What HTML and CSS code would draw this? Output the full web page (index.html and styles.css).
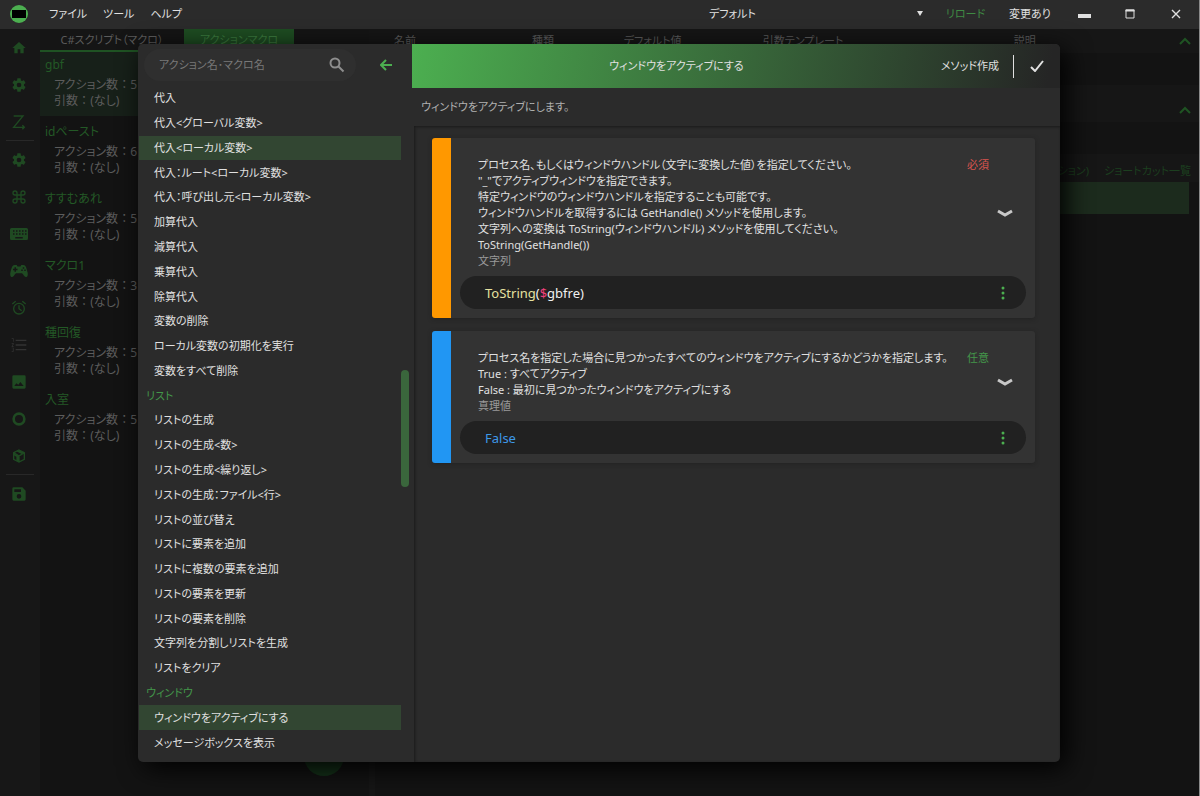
FILE: index.html
```
<!DOCTYPE html>
<html lang="ja">
<head>
    <meta charset="UTF-8">
    <title>アクションマクロ</title>
    <link rel="stylesheet" href="styles.css">
</head>
<body>
    <header class="titlebar">
        <svg class="logo" viewBox="0 0 18 18"><circle cx="9" cy="9" r="9" fill="#4caf50"/><rect x="2" y="5" width="14" height="8" fill="#000"/></svg>
        <nav class="menu">
            <button>ファイル</button>
            <button>ツール</button>
            <button>ヘルプ</button>
        </nav>
        <button class="profile"><span>デフォルト</span><i class="arrow"></i></button>
        <button class="reload">リロード</button>
        <span class="changed">変更あり</span>
        <div class="window-buttons">
            <button aria-label="最小化"><svg viewBox="0 0 14 14"><rect x="1" y="7" width="13" height="4" fill="#e0e0e0"/></svg></button>
            <button aria-label="最大化"><svg viewBox="0 0 14 14"><path d="M3 3h8v8H3z" fill="none" stroke="#e0e0e0"/><path d="M2.500 3.500h9" stroke="#e0e0e0" stroke-width="2"/></svg></button>
            <button aria-label="閉じる"><svg viewBox="0 0 14 14"><path d="M3 3l8 8M11 3l-8 8" stroke="#e0e0e0" stroke-width="1.400"/></svg></button>
        </div>
    </header>

    <div class="workspace">
        <nav class="sidebar">
            <button aria-label="ホーム"><svg viewBox="0 0 24 24"><path d="M10 20v-6h4v6h5v-8h3L12 3 2 12h3v8z"/></svg></button>
            <button aria-label="設定"><svg viewBox="0 0 24 24"><use href="#gear"/></svg></button>
            <button aria-label="Z順"><svg viewBox="0 0 24 24"><path class="line" d="M4 3h14L4 20h16M17 17l3 3-3 3"/></svg></button>
            <hr>
            <button aria-label="マクロ設定"><svg viewBox="0 0 24 24"><path id="gear" d="M12 15.500A3.500 3.500 0 0 1 8.500 12 3.500 3.500 0 0 1 12 8.500a3.500 3.500 0 0 1 3.500 3.500 3.500 3.500 0 0 1-3.500 3.500m7.430-2.530c.04-.32.07-.64.07-.97s-.03-.66-.07-1l2.110-1.630c.19-.15.24-.42.12-.64l-2-3.460c-.12-.22-.39-.31-.61-.22l-2.490 1c-.52-.39-1.060-.73-1.690-.98l-.37-2.650A.506.506 0 0 0 14 2h-4c-.25 0-.46.18-.5.42l-.37 2.650c-.63.25-1.170.59-1.690.98l-2.490-1c-.22-.09-.49 0-.61.22l-2 3.460c-.13.22-.07.49.12.64L4.570 11c-.04.34-.07.67-.07 1s.03.65.07.97l-2.110 1.660c-.19.15-.25.42-.12.64l2 3.460c.12.22.39.3.61.22l2.490-1.010c.52.4 1.060.74 1.690.99l.37 2.650c.04.24.25.42.5.42h4c.25 0 .46-.18.5-.42l.37-2.650c.63-.26 1.170-.59 1.690-.99l2.490 1.010c.22.08.49 0 .61-.22l2-3.460c.12-.22.07-.49-.12-.64z"/></svg></button>
            <button aria-label="ショートカット"><svg viewBox="0 0 24 24"><path class="line" d="M9 9V6a3 3 0 1 0-3 3h12a3 3 0 1 0-3-3v12a3 3 0 1 0 3-3H6a3 3 0 1 0 3 3z"/></svg></button>
            <button aria-label="キーボード"><svg class="wide" viewBox="0 0 24 18"><path fill-rule="evenodd" d="M2 1h20a2 2 0 0 1 2 2v12a2 2 0 0 1-2 2H2a2 2 0 0 1-2-2V3a2 2 0 0 1 2-2M4 4v2h2V4zm4 0v2h2V4zm4 0v2h2V4zm4 0v2h2V4zm4 0v2h2V4zM4 8v2h2V8zm4 0v2h2V8zm4 0v2h2V8zm4 0v2h2V8zm4 0v2h2V8zM7 13v2h10v-2z"/></svg></button>
            <button aria-label="ゲームパッド"><svg class="wide" viewBox="0 0 24 18"><path fill-rule="evenodd" d="M6 1h3l1 2h4l1-2h3c3 0 4 4 5.500 10 .8 4-.5 6-2.500 6-2 0-3-4-5-5H8c-2 1-3 5-5 5-2 0-3.300-2-2.500-6C2 5 3 1 6 1m0 3v2H4v2h2v2h2V8h2V6H8V4zm11 0v2h2V4zm-2 3v2h2V7zm4 0v2h2V7z"/></svg></button>
            <button aria-label="タイマー"><svg viewBox="0 0 24 24"><circle class="line" cx="12" cy="13" r="8"/><path class="line" d="M12 8v5l4 3M2 6l5-4M22 6l-5-4"/></svg></button>
            <button aria-label="リスト"><svg class="grey" viewBox="0 0 24 24"><path d="M7 4h16v2H7zm0 7h16v2H7zm0 7h16v2H7zM1 2h3v5H3V3H1zm0 7h3v2l-2 3h2v1H1v-1l2-4H1zm0 7h3v6H1v-1h2v-1H2v-1h1v-2H1z"/></svg></button>
            <button aria-label="画像"><svg viewBox="0 0 24 24"><path fill-rule="evenodd" d="M4 2h16a2 2 0 0 1 2 2v16a2 2 0 0 1-2 2H4a2 2 0 0 1-2-2V4a2 2 0 0 1 2-2M5 18h14l-5-6-3 4-3-2z"/></svg></button>
            <button aria-label="録画"><svg viewBox="0 0 24 24"><circle class="ring" cx="12" cy="12" r="8"/></svg></button>
            <button aria-label="パッケージ"><svg viewBox="0 0 24 24"><path class="line" d="M12 3l8 4v10l-8 4-8-4V7zM4 7l8 5 8-5M12 12v9"/><path d="M12 3l8 4-4 2-8-4zM4 8l8 4v9l-4-2v-6l-4-2z"/></svg></button>
            <hr>
            <button aria-label="保存"><svg viewBox="0 0 24 24"><path fill-rule="evenodd" d="M4 2h13l5 5v13a2 2 0 0 1-2 2H4a2 2 0 0 1-2-2V4a2 2 0 0 1 2-2M5 5v4h10V5zm7 7a3 3 0 1 0 0 7 3 3 0 0 0 0-7"/></svg></button>
        </nav>

        <section class="macros">
            <div class="tabs">
                <button>C#スクリプト（マクロ）</button>
                <button class="active">アクションマクロ</button>
            </div>
            <ul class="macro-list">
                <li class="selected"><h3>gbf</h3><p>アクション数 ： 5</p><p>引数 ： (なし)</p></li>
                <li><h3>idペースト</h3><p>アクション数 ： 6</p><p>引数 ： (なし)</p></li>
                <li><h3>すすむあれ</h3><p>アクション数 ： 5</p><p>引数 ： (なし)</p></li>
                <li><h3>マクロ1</h3><p>アクション数 ： 3</p><p>引数 ： (なし)</p></li>
                <li><h3>種回復</h3><p>アクション数 ： 5</p><p>引数 ： (なし)</p></li>
                <li><h3>入室</h3><p>アクション数 ： 5</p><p>引数 ： (なし)</p></li>
            </ul>
            <button class="add" aria-label="追加"></button>
        </section>

        <main class="detail">
            <div class="arguments">
                <span>名前</span><span>種類</span><span>デフォルト値</span><span>引数テンプレート</span><span>説明</span>
                <svg viewBox="0 0 12 8"><path d="M1 7l5-5 5 5"/></svg>
            </div>
            <div class="band"></div>
            <div class="variables"><svg viewBox="0 0 12 8"><path d="M1 7l5-5 5 5"/></svg></div>
            <div class="band"></div>
            <div class="links"><a href="#">(アクション)</a><a href="#">ショートカット一覧</a></div>
            <div class="current"></div>
        </main>
    </div>

    <div class="overlay">
        <div class="dialog" role="dialog" aria-label="アクション編集">
            <aside class="picker">
                <div class="search-row">
                    <div class="search">
                        <input type="text" placeholder="アクション名･マクロ名" aria-label="アクション名･マクロ名">
                        <svg viewBox="0 0 16 16"><circle cx="6" cy="6" r="4.500"/><path d="M9.500 9.500l5 5"/></svg>
                    </div>
                    <button class="back" aria-label="戻る"><svg viewBox="0 0 12 12"><path d="M6 1L1 6l5 5M1 6h11"/></svg></button>
                </div>
                <div class="scroll">
                    <ul class="actions">
                        <li>代入</li>
                        <li>代入&lt;グローバル変数&gt;</li>
                        <li class="selected">代入&lt;ローカル変数&gt;</li>
                        <li>代入：ルート&lt;ローカル変数&gt;</li>
                        <li>代入：呼び出し元&lt;ローカル変数&gt;</li>
                        <li>加算代入</li>
                        <li>減算代入</li>
                        <li>乗算代入</li>
                        <li>除算代入</li>
                        <li>変数の削除</li>
                        <li>ローカル変数の初期化を実行</li>
                        <li>変数をすべて削除</li>
                        <li class="group">リスト</li>
                        <li>リストの生成</li>
                        <li>リストの生成&lt;数&gt;</li>
                        <li>リストの生成&lt;繰り返し&gt;</li>
                        <li>リストの生成：ファイル&lt;行&gt;</li>
                        <li>リストの並び替え</li>
                        <li>リストに要素を追加</li>
                        <li>リストに複数の要素を追加</li>
                        <li>リストの要素を更新</li>
                        <li>リストの要素を削除</li>
                        <li>文字列を分割しリストを生成</li>
                        <li>リストをクリア</li>
                        <li class="group">ウィンドウ</li>
                        <li class="selected">ウィンドウをアクティブにする</li>
                        <li>メッセージボックスを表示</li>
                    </ul>
                    <div class="track"><div class="thumb"></div></div>
                </div>
            </aside>

            <section class="editor">
                <header class="editor-head">
                    <h2>ウィンドウをアクティブにする</h2>
                    <button class="method">メソッド作成</button>
                    <button class="ok" aria-label="決定"><svg viewBox="0 0 14 12"><path d="M1 7l4 4 8-10"/></svg></button>
                </header>
                <p class="summary">ウィンドウをアクティブにします。</p>
                <div class="params">
                    <article class="card required">
                        <div class="card-head">
                            <p class="text">プロセス名、もしくはウィンドウハンドル（文字に変換した値）を指定してください。<br>"_"でアクティブウィンドウを指定できます。<br>特定ウィンドウのウィンドウハンドルを指定することも可能です。<br>ウィンドウハンドルを取得するには GetHandle() メソッドを使用します。<br>文字列への変換は ToString(ウィンドウハンドル) メソッドを使用してください。<br>ToString(GetHandle())<br><small>文字列</small></p>
                            <span class="badge">必須</span>
                            <button class="expand" aria-label="開く"><svg viewBox="0 0 16 8"><path d="M1 2l7 4 7-4"/></svg></button>
                        </div>
                        <div class="value">
                            <code><b class="fn">ToString</b>(<b class="sigil">$</b>gbfre)</code>
                            <button class="more" aria-label="メニュー"><svg viewBox="0 0 4 14"><circle cx="2" cy="2" r="1.500"/><circle cx="2" cy="7" r="1.500"/><circle cx="2" cy="12" r="1.500"/></svg></button>
                        </div>
                    </article>
                    <article class="card optional">
                        <div class="card-head">
                            <p class="text">プロセス名を指定した場合に見つかったすべてのウィンドウをアクティブにするかどうかを指定します。<br>True : すべてアクティブ<br>False : 最初に見つかったウィンドウをアクティブにする<br><small>真理値</small></p>
                            <span class="badge">任意</span>
                            <button class="expand" aria-label="開く"><svg viewBox="0 0 16 8"><path d="M1 2l7 4 7-4"/></svg></button>
                        </div>
                        <div class="value">
                            <code><b class="bool">False</b></code>
                            <button class="more" aria-label="メニュー"><svg viewBox="0 0 4 14"><circle cx="2" cy="2" r="1.500"/><circle cx="2" cy="7" r="1.500"/><circle cx="2" cy="12" r="1.500"/></svg></button>
                        </div>
                    </article>
                </div>
            </section>
        </div>
    </div>
</body>
</html>
```
FILE: styles.css
```
* {
    box-sizing: border-box;
}
body {
    margin: 0;
    height: 100vh;
    display: flex;
    flex-direction: column;
    overflow: hidden;
    background: #131313;
    border-right: 1px solid #8a8a8a;
    color: #e0e0e0;
    font: 11px/16px "Noto Sans", "Noto Sans CJK JP", sans-serif;
    font-feature-settings: "palt";
}
h2, h3, p, ul {
    margin: 0;
    padding: 0;
    font-size: inherit;
    font-weight: normal;
    list-style: none;
}
button {
    display: flex;
    align-items: center;
    justify-content: center;
    padding: 0;
    border: none;
    background: none;
    color: inherit;
    font: inherit;
    font-feature-settings: inherit;
    white-space: nowrap;
    cursor: pointer;
}
svg {
    fill: none;
    flex: none;
}

/* title bar */
.titlebar {
    display: flex;
    align-items: center;
    height: 29px;
    padding: 0 0 2px 10px;
    background: #2b2b2b;
}
.logo {
    width: 18px;
    height: 18px;
}
.menu {
    display: flex;
    gap: 16px;
    margin-left: 21px;
}
.profile {
    flex: 1;
    margin-left: 366px;
}
.profile span {
    flex: 1;
    text-align: center;
}
.arrow {
    border: 3px solid transparent;
    border-top: 5px solid #e0e0e0;
    border-bottom: none;
}
.reload {
    width: 33px;
    margin-left: 26px;
    color: #3f8a43;
}
.changed {
    width: 40px;
    margin-left: 27px;
    white-space: nowrap;
}
.window-buttons {
    display: flex;
    margin-left: 12px;
}
.window-buttons button {
    width: 46px;
    height: 27px;
}
.window-buttons svg {
    width: 14px;
    height: 14px;
}

/* main window behind the dialog */
.workspace {
    flex: 1;
    display: flex;
    color: #5c5c5c;
}
.sidebar {
    width: 40px;
    background: #171717;
}
.sidebar button {
    width: 38px;
    height: 37px;
}
.sidebar hr {
    margin: 0 6px;
    border: none;
    border-top: 1px solid #282828;
}
.sidebar svg {
    width: 16px;
    height: 16px;
    fill: #1f4a22;
}
.sidebar .wide {
    width: 18px;
}
.sidebar .line,
.sidebar .ring {
    fill: none;
    stroke: #1f4a22;
    stroke-width: 2;
}
.sidebar .ring {
    stroke-width: 4;
}
.sidebar .grey {
    fill: #333;
}
.macros {
    position: relative;
    width: 329px;
    font-size: 12px;
}
.tabs {
    display: flex;
    height: 23px;
    background: #151515;
    border-bottom: 2px solid #1f5323;
    font-size: 11px;
}
.tabs button {
    width: 144px;
}
.tabs .active {
    width: 110px;
    background: #1e4d22;
    color: #3b7a3e;
}
.macro-list {
    display: grid;
    gap: 3px;
}
.macro-list li {
    height: 64px;
    padding: 5px 5px 0;
}
.macro-list .selected {
    background: #172019;
}
.macro-list h3 {
    margin-bottom: 4px;
    color: #235926;
}
.macro-list p {
    padding-left: 9px;
}
.add {
    position: absolute;
    right: 25px;
    bottom: 20px;
    width: 40px;
    height: 40px;
    border-radius: 50%;
    background: #15331a;
}
.detail {
    flex: 1;
    border-left: 6px solid #161616;
}
.detail svg {
    width: 12px;
    height: 8px;
    stroke: #1f5323;
    stroke-width: 2;
}
.arguments {
    display: grid;
    grid-template-columns: 137fr 91fr 138fr 249fr 164fr 12px;
    align-items: center;
    height: 24px;
    padding: 0 8px 0 19px;
    background: #161616;
}
.band {
    height: 32px;
}
.variables {
    display: flex;
    align-items: center;
    justify-content: flex-end;
    height: 37px;
    padding: 12px 8px 0 0;
    background: #161616;
}
.links {
    display: flex;
    align-items: center;
    justify-content: flex-end;
    gap: 15px;
    height: 28px;
    padding: 6px 8px 0 0;
    background: #161616;
}
.links a {
    color: #1c3f1f;
    text-decoration: none;
}
.current {
    height: 32px;
    margin-right: 10px;
    background: #1c2b1d;
}

/* dialog */
.overlay {
    position: absolute;
    inset: 44px 140px 34px 138px;
}
.dialog {
    display: flex;
    height: 100%;
    border-radius: 5px;
    background: #2b2b2b;
    box-shadow: 6px 6px 26px #000;
    overflow: hidden;
}
.picker {
    display: flex;
    flex: none;
    flex-direction: column;
    width: 274px;
    padding-bottom: 7px;
}
.search-row {
    display: flex;
    align-items: center;
    height: 42px;
    padding-left: 6px;
}
.search {
    display: flex;
    align-items: center;
    width: 212px;
    height: 32px;
    padding: 0 11px 0 15px;
    border-radius: 16px;
    background: #2f2f2f;
}
.search input {
    flex: 1;
    min-width: 0;
    padding: 0;
    border: none;
    outline: none;
    background: none;
    color: #e0e0e0;
    font: inherit;
    font-feature-settings: inherit;
}
.search input::placeholder {
    color: #787878;
}
.search svg {
    width: 16px;
    height: 16px;
    stroke: #8e8e8e;
    stroke-width: 2;
}
.back {
    margin-left: 24px;
}
.back svg {
    width: 12px;
    height: 12px;
    stroke: #4caf50;
    stroke-width: 2;
}
.scroll {
    flex: 1;
    display: flex;
    min-height: 0;
}
.actions {
    flex: 1;
    display: grid;
    grid-auto-rows: 1fr;
}
.actions li {
    display: flex;
    align-items: center;
    min-height: 0;
    margin-left: 1px;
    padding-left: 15px;
}
.actions .selected {
    background: #324632;
}
.actions .group {
    padding-left: 7px;
    color: #43964a;
}
.track {
    display: flex;
    flex-direction: column;
    width: 11px;
    padding-right: 3px;
}
.track::before {
    content: "";
    flex: 284;
}
.track::after {
    content: "";
    flex: 268;
}
.thumb {
    flex: 117;
    border-radius: 4px;
    background: #3a663c;
}
.editor {
    flex: 1;
    display: flex;
    flex-direction: column;
    min-width: 0;
}
.editor-head {
    display: flex;
    align-items: center;
    height: 44px;
    background: linear-gradient(100deg, #4caf50, #252525 98%);
}
.editor-head h2 {
    flex: 1;
    text-align: center;
}
.method {
    height: 23px;
    padding-right: 14px;
    border-right: 1px solid #e0e0e0;
}
.ok {
    width: 46px;
}
.ok svg {
    width: 14px;
    height: 12px;
    stroke: #e0e0e0;
    stroke-width: 2;
}
.summary {
    height: 38px;
    padding: 11px 9px;
    color: #b0b0b0;
}
.params {
    flex: 1;
    display: flex;
    flex-direction: column;
    gap: 13px;
    margin-left: 2px;
    padding: 12px 25px 0 18px;
    box-shadow: inset 1px 1px 3px #1a1a1a;
}
.card {
    padding: 19px 9px 9px;
    border-left: 19px solid;
    border-radius: 3px;
    background: #333;
    box-shadow: 0 1px 4px #222;
}
.required {
    border-left-color: #ff9800;
}
.optional {
    border-left-color: #2196f3;
}
.card-head {
    display: flex;
    margin-bottom: 7px;
    padding: 0 13px 0 18px;
}
.text {
    flex: 1;
    min-width: 0;
}
.text small {
    color: #999;
    font-size: 11px;
}
.badge {
    width: 30px;
}
.required .badge {
    color: #d9534f;
}
.optional .badge {
    color: #43964a;
}
.expand svg {
    width: 16px;
    height: 8px;
    stroke: #c8c8c8;
    stroke-width: 3;
}
.value {
    display: flex;
    align-items: center;
    justify-content: space-between;
    height: 33px;
    padding: 0 21px 0 25px;
    border-radius: 17px;
    background: #212121;
}
.value code {
    color: #f0f0f0;
    font: 13px/16px "Noto Sans", sans-serif;
}
.value b {
    font-weight: normal;
}
.fn {
    color: #e6e1a0;
}
.sigil {
    color: #ec407a;
}
.bool {
    color: #3d98e8;
}
.more svg {
    width: 4px;
    height: 14px;
    fill: #4caf50;
}
```
